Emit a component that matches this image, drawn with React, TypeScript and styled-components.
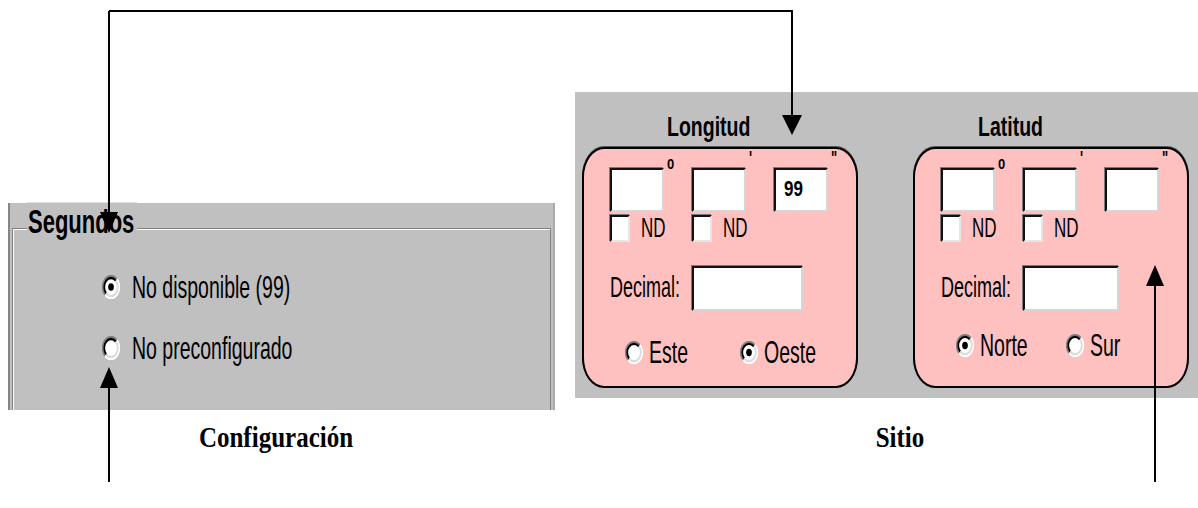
import styled, { createGlobalStyle } from 'styled-components';

const GlobalStyle = createGlobalStyle`
  html, body {
    margin: 0;
    padding: 0;
    background: #fff;
  }
  body {
    font-family: "Liberation Sans", Arial, sans-serif;
    color: #000;
  }
`;

const Page = styled.div`
  position: relative;
  width: 1198px;
  height: 508px;
  overflow: hidden;
  background: #fff;
`;

const Stage = styled.div`
  display: grid;
  grid-template-columns: 547px 623px;
  column-gap: 20px;
  row-gap: 12px;
  padding-left: 8px;
  align-items: start;
`;

const Stretched = styled.span<{ $sy?: number }>`
  display: inline-block;
  transform: scaleY(${(p) => p.$sy ?? 1.6});
  transform-origin: center;
  white-space: nowrap;
`;

/* ---------- Configuración panel ---------- */

const ConfigPanel = styled.div`
  box-sizing: border-box;
  margin-top: 203px;
  height: 207px;
  background: #c0c0c0;
  border-left: 2px solid #868686;
  border-right: 2px solid #a9a9a9;
  padding: 25px 2px 0 2px;
  display: flex;
`;

const GroupFrame = styled.div`
  position: relative;
  flex: 1;
  border: 1px solid #808080;
  border-bottom: none;
  box-shadow: inset 1px 1px 0 #fff;
  padding: 43px 0 0 89px;
  display: flex;
  flex-direction: column;
  gap: 31px;
`;

const GroupTitle = styled(Stretched)`
  position: absolute;
  left: 14px;
  top: -20px;
  padding: 0 3px 0 1px;
  background: #c0c0c0;
  font-size: 22px;
  font-weight: bold;
  line-height: 26px;
`;

const OptionRow = styled.div`
  display: flex;
  align-items: center;
  height: 30px;
  gap: 12px;
`;

const OptionLabel = styled(Stretched)`
  font-size: 19.5px;
  line-height: 30px;
`;

/* ---------- Sitio panel ---------- */

const SitePanel = styled.div`
  box-sizing: border-box;
  margin-top: 92px;
  height: 306px;
  background: #c0c0c0;
  padding: 22px 0 0 7px;
  display: flex;
  gap: 55px;
`;

const CoordColumn = styled.div`
  display: flex;
  flex-direction: column;
`;

const CoordTitle = styled.div<{ $indent: number }>`
  height: 24px;
  padding-left: ${(p) => p.$indent}px;
  margin-bottom: 9px;
  font-size: 19.5px;
  font-weight: bold;
  line-height: 24px;
`;

const PinkBox = styled.div`
  box-sizing: border-box;
  width: 276px;
  height: 241px;
  background: #ffc0c0;
  border: 2px solid #000;
  border-radius: 22px / 30px;
  box-shadow: 0 -1px 0 #5a5a5a;
  padding: 19px 0 0 26px;
  display: flex;
  flex-direction: column;
`;

const DmsRow = styled.div`
  display: flex;
  gap: 28px;
`;

const DmsField = styled.div`
  position: relative;
`;

const InputBox = styled.div<{ $w: number; $h: number }>`
  box-sizing: border-box;
  width: ${(p) => p.$w}px;
  height: ${(p) => p.$h}px;
  background: #fff;
  border-style: solid;
  border-width: 2px;
  border-color: #111 #d6d6d6 #d6d6d6 #111;
  box-shadow: -1px -1px 0 #7a7a7a;
  display: flex;
  align-items: center;
  padding-left: 8px;
`;

const FieldValue = styled(Stretched)`
  font-size: 17px;
  font-weight: bold;
`;

const Mark = styled(Stretched)<{ $top: number }>`
  position: absolute;
  left: calc(100% + 3px);
  top: ${(p) => p.$top}px;
  font-size: 13px;
  font-weight: bold;
  line-height: 12px;
`;

const NdRow = styled.div`
  display: flex;
  margin-top: 3px;
`;

const NdItem = styled.div`
  width: 82px;
  display: flex;
  align-items: center;
  gap: 11px;
`;

const Checkbox = styled.span`
  box-sizing: border-box;
  width: 20px;
  height: 27px;
  background: #fff;
  border-style: solid;
  border-width: 2px;
  border-color: #111 #e6e6e6 #e6e6e6 #111;
  box-shadow: -1px -1px 0 #7a7a7a;
`;

const NdLabel = styled(Stretched)`
  font-size: 17px;
`;

const DecimalRow = styled.div`
  display: flex;
  align-items: center;
  margin-top: 24px;
`;

const DecimalLabel = styled.div`
  width: 82px;
  font-size: 18px;
`;

const RadioRow = styled.div<{ $top: number }>`
  display: flex;
  align-items: center;
  margin-top: ${(p) => p.$top}px;
  padding-left: 15px;
`;

const RadioItem = styled.div<{ $w: number }>`
  width: ${(p) => p.$w}px;
  display: flex;
  align-items: center;
  gap: 6px;
`;

const RadioLabel = styled(Stretched)`
  font-size: 19.5px;
`;

const RadioSvg = styled.svg<{ $w: number; $h: number }>`
  display: block;
  flex: none;
  width: ${(p) => p.$w}px;
  height: ${(p) => p.$h}px;
`;

/* ---------- captions + arrows ---------- */

const Caption = styled.div<{ $shift: number }>`
  font-family: "Liberation Serif", "Times New Roman", serif;
  font-weight: bold;
  font-size: 25px;
  line-height: 30px;
  text-align: center;
  transform: scaleY(1.2);
  padding-left: ${(p) => Math.max(p.$shift, 0) * 2}px;
  padding-right: ${(p) => Math.max(-p.$shift, 0) * 2}px;
`;

const Overlay = styled.svg`
  position: absolute;
  left: 0;
  top: 0;
  width: 1198px;
  height: 508px;
  pointer-events: none;
`;

const Radio = ({ checked, w = 18, h = 23 }: { checked?: boolean; w?: number; h?: number }) => (
  <RadioSvg $w={w} $h={h} viewBox="0 0 12 12" preserveAspectRatio="none">
    <circle cx="6" cy="6" r="5" fill="#fff" />
    <path d="M9.9 2.1 A5.5 5.5 0 0 0 2.1 9.9" fill="none" stroke="#808080" strokeWidth="1.2" />
    <path d="M9.9 2.1 A5.5 5.5 0 0 1 2.1 9.9" fill="none" stroke="#fff" strokeWidth="1.2" />
    <path d="M9.2 2.8 A4.5 4.5 0 0 0 2.8 9.2" fill="none" stroke="#000" strokeWidth="1.2" />
    <path d="M9.2 2.8 A4.5 4.5 0 0 1 2.8 9.2" fill="none" stroke="#dcdcdc" strokeWidth="1.2" />
    {checked && <circle cx="6" cy="6" r="1.9" fill="#000" />}
  </RadioSvg>
);

type Coord = {
  title: string;
  indent: number;
  seconds?: string;
  decimalWidth: number;
  radioTop: number;
  firstWidth: number;
  options: { label: string; checked: boolean }[];
};

const coords: Coord[] = [
  {
    title: 'Longitud',
    indent: 85,
    seconds: '99',
    decimalWidth: 111,
    radioTop: 30,
    firstWidth: 115,
    options: [
      { label: 'Este', checked: false },
      { label: 'Oeste', checked: true },
    ],
  },
  {
    title: 'Latitud',
    indent: 65,
    decimalWidth: 96,
    radioTop: 23,
    firstWidth: 110,
    options: [
      { label: 'Norte', checked: true },
      { label: 'Sur', checked: false },
    ],
  },
];

const CoordBlock = ({ c }: { c: Coord }) => (
  <CoordColumn>
    <CoordTitle $indent={c.indent}>
      <Stretched $sy={1.45}>{c.title}</Stretched>
    </CoordTitle>
    <PinkBox>
      <DmsRow>
        <DmsField>
          <InputBox $w={54} $h={44} />
          <Mark $top={-9} $sy={1.1}>0</Mark>
        </DmsField>
        <DmsField>
          <InputBox $w={54} $h={44} />
          <Mark $top={-15}>'</Mark>
        </DmsField>
        <DmsField>
          <InputBox $w={54} $h={44}>
            {c.seconds && <FieldValue $sy={1.25}>{c.seconds}</FieldValue>}
          </InputBox>
          <Mark $top={-15}>"</Mark>
        </DmsField>
      </DmsRow>
      <NdRow>
        <NdItem>
          <Checkbox />
          <NdLabel>ND</NdLabel>
        </NdItem>
        <NdItem>
          <Checkbox />
          <NdLabel>ND</NdLabel>
        </NdItem>
      </NdRow>
      <DecimalRow>
        <DecimalLabel>
          <Stretched>Decimal:</Stretched>
        </DecimalLabel>
        <InputBox $w={c.decimalWidth} $h={45} />
      </DecimalRow>
      <RadioRow $top={c.radioTop}>
        {c.options.map((o, i) => (
          <RadioItem key={o.label} $w={i === 0 ? c.firstWidth : 80}>
            <Radio checked={o.checked} />
            <RadioLabel>{o.label}</RadioLabel>
          </RadioItem>
        ))}
      </RadioRow>
    </PinkBox>
  </CoordColumn>
);

const Connectors = () => (
  <Overlay viewBox="0 0 1198 508">
    <path
      d="M109 11 H793 M109 11 V214 M792 11 V117 M109 482 V386 M1155 482 V284"
      stroke="#000"
      strokeWidth="2"
      fill="none"
    />
    <g fill="#000">
      <polygon points="100,212 118,212 109,233" />
      <polygon points="782,115 802,115 792,135" />
      <polygon points="100,388 118,388 109,367" />
      <polygon points="1146,286 1164,286 1155,265" />
    </g>
  </Overlay>
);

export default function App() {
  return (
    <Page>
      <GlobalStyle />
      <Stage>
        <ConfigPanel>
          <GroupFrame>
            <GroupTitle $sy={1.5}>Segundos</GroupTitle>
            <OptionRow>
              <Radio checked w={18} h={24} />
              <OptionLabel>No disponible (99)</OptionLabel>
            </OptionRow>
            <OptionRow>
              <Radio w={18} h={24} />
              <OptionLabel>No preconfigurado</OptionLabel>
            </OptionRow>
          </GroupFrame>
        </ConfigPanel>
        <SitePanel>
          {coords.map((c) => (
            <CoordBlock key={c.title} c={c} />
          ))}
        </SitePanel>
        <Caption $shift={-5.5}>Configuración</Caption>
        <Caption $shift={13.5}>Sitio</Caption>
      </Stage>
      <Connectors />
    </Page>
  );
}
